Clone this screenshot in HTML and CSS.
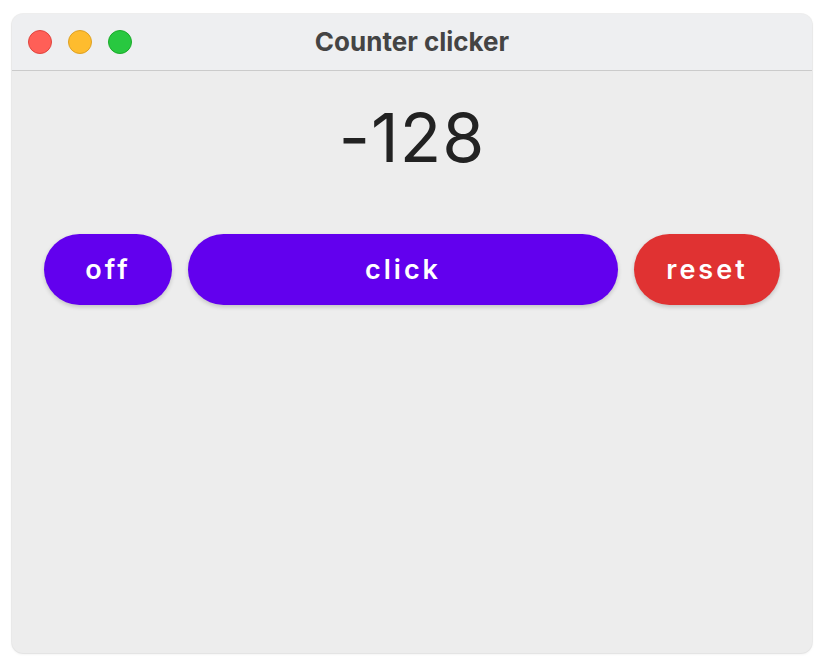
FILE: index.html
```html
<!DOCTYPE html>
<html>
<head>
<meta charset="utf-8">
<link rel="stylesheet" href="styles.css">
</head>
<body>
<div class="window">
  <div class="titlebar">
    <div class="lights">
      <span class="light red"></span>
      <span class="light yellow"></span>
      <span class="light green"></span>
    </div>
    <div class="title">Counter clicker</div>
    <div></div>
  </div>
  <div class="content">
    <div class="counter">-128</div>
    <div class="buttons">
      <button class="btn off">off</button>
      <button class="btn click">click</button>
      <button class="btn reset">reset</button>
    </div>
  </div>
</div>
</body>
</html>
```
FILE: styles.css
```css
html, body {
  margin: 0;
  padding: 0;
  background: #ffffff;
}
body {
  padding: 14px 12px;
}
.window {
  width: 800px;
  height: 639px;
  border-radius: 11px;
  overflow: hidden;
  background: #ededed;
  box-shadow: 0 0 0 1px rgba(0,0,0,0.06), 0 1px 3px rgba(0,0,0,0.08);
  display: flex;
  flex-direction: column;
}
.titlebar {
  height: 56px;
  border-bottom: 1px solid #cbcbcb;
  background: #eeeff1;
  display: grid;
  grid-template-columns: 1fr auto 1fr;
  align-items: center;
}
.lights {
  display: flex;
  gap: 16px;
  padding-left: 16px;
}
.light {
  width: 24px;
  height: 24px;
  border-radius: 50%;
  box-sizing: border-box;
}
.red { background: #ff5f57; border: 1px solid #e0443e; }
.yellow { background: #febc2e; border: 1px solid #dea123; }
.green { background: #28c840; border: 1px solid #1aab29; }
.title {
  font-family: Inter, "Liberation Sans", sans-serif;
  font-weight: 700;
  font-size: 26px;
  color: #444444;
  padding-bottom: 1px;
}
.content {
  padding: 33px 32px 0;
  display: flex;
  flex-direction: column;
}
.counter {
  font-family: Inter, "Liberation Sans", sans-serif;
  font-size: 68px;
  line-height: 66px;
  letter-spacing: 1px;
  color: #222222;
  text-align: center;
}
.buttons {
  margin-top: 64px;
  display: flex;
  gap: 16px;
}
.btn {
  height: 71px;
  border: none;
  border-radius: 36px;
  color: #ffffff;
  font-family: Inter, "Liberation Sans", sans-serif;
  font-weight: 600;
  font-size: 27px;
  letter-spacing: 3px;
  box-shadow: 0 2px 4px rgba(0,0,0,0.18);
  padding: 0;
}
.off { width: 128px; background: #6200ee; }
.click { flex: 1; background: #6200ee; }
.reset { width: 146px; background: #e03232; }
```
